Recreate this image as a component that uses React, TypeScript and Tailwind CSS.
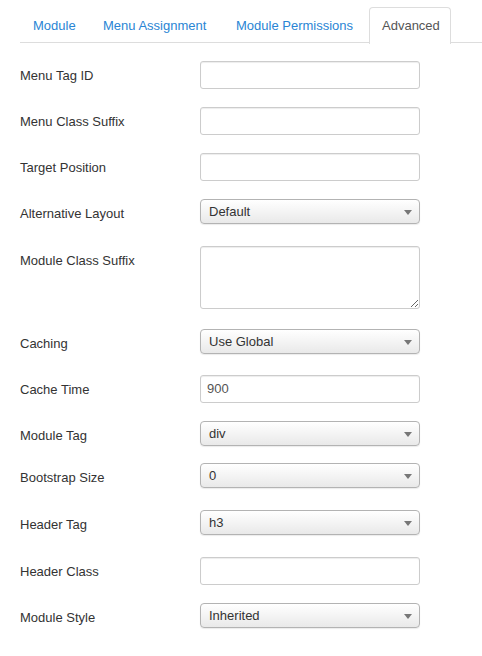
import React from "react";

type Row = {
  label: string;
  kind: "input" | "select" | "textarea";
  value?: string;
  mb: string;
};

const rows: Row[] = [
  { label: "Menu Tag ID", kind: "input", mb: "mb-[18px]" },
  { label: "Menu Class Suffix", kind: "input", mb: "mb-[18px]" },
  { label: "Target Position", kind: "input", mb: "mb-[18px]" },
  { label: "Alternative Layout", kind: "select", value: "Default", mb: "mb-[22px]" },
  { label: "Module Class Suffix", kind: "textarea", mb: "mb-[20px]" },
  { label: "Caching", kind: "select", value: "Use Global", mb: "mb-[21px]" },
  { label: "Cache Time", kind: "input", value: "900", mb: "mb-[18px]" },
  { label: "Module Tag", kind: "select", value: "div", mb: "mb-[17px]" },
  { label: "Bootstrap Size", kind: "select", value: "0", mb: "mb-[22px]" },
  { label: "Header Tag", kind: "select", value: "h3", mb: "mb-[22px]" },
  { label: "Header Class", kind: "input", mb: "mb-[18px]" },
  { label: "Module Style", kind: "select", value: "Inherited", mb: "mb-[18px]" },
];

function Control({ row }: { row: Row }) {
  if (row.kind === "input") {
    return (
      <div className="w-[220px] h-[28px] border border-[#cccccc] rounded-[3px] bg-white shadow-[inset_0_1px_1px_rgba(0,0,0,0.075)] px-[6px] flex items-center text-[13px] text-[#555555]">
        {row.value ?? ""}
      </div>
    );
  }
  if (row.kind === "textarea") {
    return (
      <textarea
        readOnly
        className="block w-[220px] h-[63px] border border-[#cccccc] rounded-[3px] bg-white shadow-[inset_0_1px_1px_rgba(0,0,0,0.075)] outline-none"
      />
    );
  }
  return (
    <div className="relative w-[220px] h-[25px] border border-[#b3b3b3] rounded-[4px] bg-gradient-to-b from-white to-[#e9e9e9] shadow-[0_1px_1px_rgba(0,0,0,0.08)] pl-[8px] flex items-center text-[13px] text-[#333333]">
      {row.value}
      <svg
        className="absolute right-[7px] top-[10px]"
        width="8"
        height="5"
        viewBox="0 0 8 5"
      >
        <polygon points="0,0 8,0 4,5" fill="#777777" />
      </svg>
    </div>
  );
}

export default function App() {
  return (
    <div
      className="bg-white w-[482px] h-[656px] overflow-hidden text-[13px] leading-[18px] text-[#333333]"
      style={{ fontFamily: '"Liberation Sans", Arial, sans-serif' }}
    >
      <div className="pl-[20px] pt-[7px]">
        <div className="flex border-b border-[#dddddd] h-[36px]">
          <div className="w-[68px] mr-[2px] pl-[13px] pt-[10px] text-[#2a85d4] whitespace-nowrap">
            Module
          </div>
          <div className="w-[131px] mr-[2px] pl-[13px] pt-[10px] text-[#2a85d4] whitespace-nowrap">
            Menu Assignment
          </div>
          <div className="w-[144px] mr-[2px] pl-[13px] pt-[10px] text-[#2a85d4] whitespace-nowrap">
            Module Permissions
          </div>
          <div className="w-[82px] pl-[12px] pt-[9px] text-[#555555] h-[37px] border border-[#dddddd] border-b-0 rounded-t-[4px] bg-white whitespace-nowrap">
            Advanced
          </div>
        </div>
        <div className="pt-[18px]">
          {rows.map((r) => (
            <div key={r.label} className={`flex items-start ${r.mb}`}>
              <div className="w-[180px] pt-[6px] leading-[18px] text-[#333333]">
                {r.label}
              </div>
              <Control row={r} />
            </div>
          ))}
        </div>
      </div>
    </div>
  );
}
